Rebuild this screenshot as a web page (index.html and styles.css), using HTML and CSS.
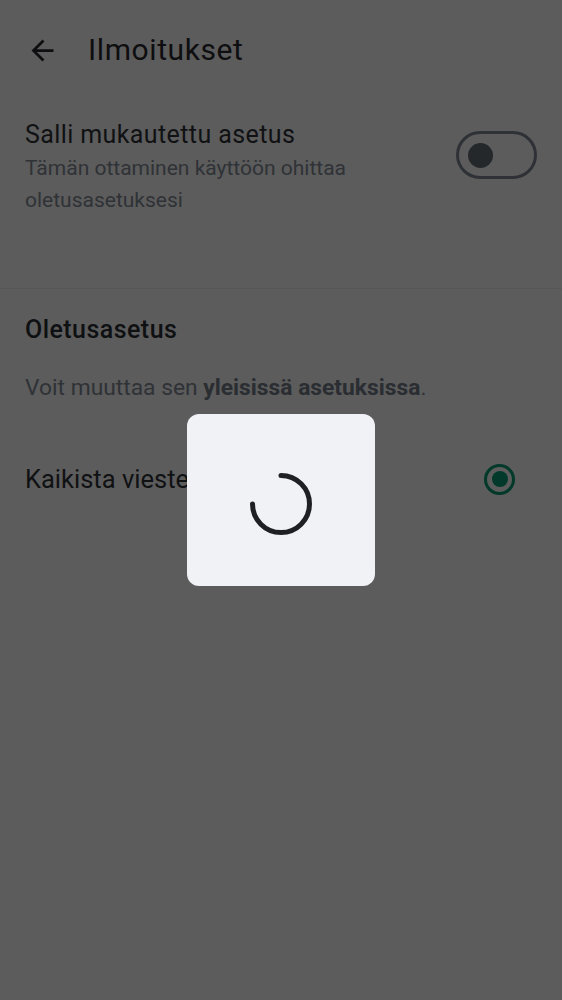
FILE: index.html
```html
<!DOCTYPE html>
<html lang="fi">
<head>
<meta charset="utf-8">
<title>Ilmoitukset</title>
<link rel="stylesheet" href="styles.css">
</head>
<body>
<header class="topbar">
  <svg class="back" viewBox="0 0 24 24" aria-hidden="true"><path d="M20 11H7.83l5.59-5.59L12 4l-8 8 8 8 1.41-1.41L7.83 13H20v-2z"/></svg>
  <h1 class="title">Ilmoitukset</h1>
</header>
<section class="custom">
  <div class="custom-text">
    <div class="item-title">Salli mukautettu asetus</div>
    <div class="item-sub">Tämän ottaminen käyttöön ohittaa oletusasetuksesi</div>
  </div>
  <div class="switch"><span class="thumb"></span></div>
</section>
<hr class="divider">
<section class="defaults">
  <h2 class="section-title">Oletusasetus</h2>
  <p class="info">Voit muuttaa sen <strong>yleisissä asetuksissa</strong>.</p>
  <div class="option">
    <span class="option-label">Kaikista viesteistä</span>
    <span class="radio"><span class="dot"></span></span>
  </div>
</section>
<div class="overlay">
  <div class="dialog">
    <svg class="spinner" viewBox="0 0 62 62" aria-hidden="true"><path d="M31 2.5 A28.5 28.5 0 1 1 2.5 31"/></svg>
  </div>
</div>
</body>
</html>
```
FILE: styles.css
```css
html, body {
  margin: 0;
  padding: 0;
  background: #5c5c5c;
  font-family: Roboto, "Noto Sans", "Liberation Sans", sans-serif;
  height: 1000px;
}
.topbar {
  height: 100px;
  display: flex;
  align-items: center;
  padding-left: 26px;
}
.back {
  width: 33px;
  height: 33px;
  fill: #0e0e10;
  flex: none;
}
.title {
  margin: 0 0 0 29px;
  font-size: 30px;
  font-weight: 400;
  color: #0e0e10;
  line-height: 34px;
  letter-spacing: 0.6px;
}
.custom {
  display: flex;
  align-items: flex-start;
  justify-content: space-between;
  padding: 18px 25px 72px 25px;
}
.custom-text {
  width: 360px;
}
.item-title {
  font-size: 25px;
  line-height: 34px;
  color: #101113;
  letter-spacing: 0.4px;
}
.item-sub {
  font-size: 21px;
  line-height: 32px;
  color: #2f3236;
}
.switch {
  margin-top: 13px;
  width: 66px;
  height: 42px;
  border: 3px solid #2e3236;
  border-radius: 24px;
  display: flex;
  align-items: center;
  padding-left: 9.5px;
  box-sizing: content-box;
  flex: none;
}
.thumb {
  width: 25px;
  height: 25px;
  border-radius: 50%;
  background: #25282b;
}
.divider {
  margin: 0;
  border: 0;
  height: 1px;
  background: #565656;
}
.defaults {
  padding: 24px 25px 0 25px;
}
.section-title {
  margin: 0;
  font-size: 25px;
  font-weight: 500;
  line-height: 34px;
  color: #0f1012;
  letter-spacing: 0.45px;
}
.info {
  margin: 25px 0 0 0;
  font-size: 22.8px;
  line-height: 32px;
  color: #2f3236;
}
.info strong {
  font-weight: 700;
  color: #2a2d31;
}
.option {
  margin-top: 58px;
  display: flex;
  align-items: center;
  justify-content: space-between;
  padding-right: 22px;
}
.option-label {
  font-size: 25.5px;
  line-height: 34px;
  color: #101113;
}
.radio {
  width: 25px;
  height: 25px;
  border: 3.5px solid #02392b;
  border-radius: 50%;
  display: flex;
  align-items: center;
  justify-content: center;
}
.dot {
  width: 16px;
  height: 16px;
  border-radius: 50%;
  background: #02392b;
}
.overlay {
  position: fixed;
  inset: 0;
  display: flex;
  align-items: center;
  justify-content: center;
}
.dialog {
  width: 188px;
  height: 172px;
  border-radius: 12px;
  background: #f1f2f6;
  display: flex;
  align-items: center;
  justify-content: center;
  box-sizing: border-box;
  padding-top: 8px;
}
.spinner {
  width: 62px;
  height: 62px;
  fill: none;
  stroke: #1f2024;
  stroke-width: 5;
  stroke-linecap: round;
}
```
